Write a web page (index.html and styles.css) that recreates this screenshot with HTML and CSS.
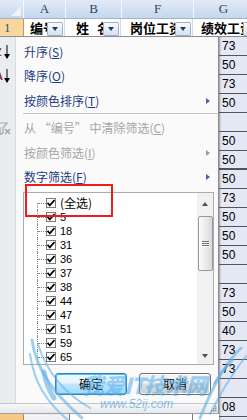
FILE: index.html
```html
<!DOCTYPE html>
<html lang="zh-CN">
<head>
<meta charset="utf-8">
<title>筛选</title>
<link rel="stylesheet" href="styles.css">
</head>
<body>
<div class="page">
  <div class="colhead">
    <div class="corner"><svg width="10" height="10" viewBox="0 0 10 10"><polygon points="10,0 10,10 0,10" fill="#eef3f9"/></svg></div>
    <div class="ch ch-a">A</div>
    <div class="ch ch-b">B</div>
    <div class="ch ch-f">F</div>
    <div class="ch ch-g">G</div>
  </div>
  <div class="row1">
    <div class="rh">1</div>
    <div class="hc hc-a"><span class="ht">编号</span><span class="dd"></span></div>
    <div class="hc hc-b"><span class="ht">姓<span class="gap">名</span></span><span class="dd"></span></div>
    <div class="hc hc-f"><span class="ht">岗位工资</span><span class="dd"></span></div>
    <div class="hc hc-g"><span class="ht">绩效工资</span><span class="dd"></span></div>
  </div>
  <div class="main">
    <div class="left">
      <div class="menu">
        <div class="mi h24">
          <span class="ico"><span class="ltr">Z</span><svg class="darr" width="6" height="14" viewBox="0 0 6 14"><path d="M3 0V10" stroke="#000" stroke-width="1"/><path d="M0 9H6L3 14Z" fill="#000"/></svg></span>
          <span class="lbl">升序(<u>S</u>)</span>
        </div>
        <div class="mi h24">
          <span class="ico"><span class="ltr ltr2">A</span><svg class="darr" width="6" height="14" viewBox="0 0 6 14"><path d="M3 0V10" stroke="#000" stroke-width="1"/><path d="M0 9H6L3 14Z" fill="#000"/></svg></span>
          <span class="lbl">降序(<u>O</u>)</span>
        </div>
        <div class="mi h25">
          <span class="ico"></span>
          <span class="lbl">按颜色排序(<u>T</u>)</span>
          <span class="arr"></span>
        </div>
        <div class="sep"></div>
        <div class="mi h24 dis">
          <span class="ico"><svg width="11" height="13" viewBox="0 0 11 13"><path d="M-3 1H7L3 6V11L0 12.5V6Z" fill="none" stroke="#9aa4ae" stroke-width="1.2"/><path d="M5 7L10 12M10 7L5 12" stroke="#9aa4ae" stroke-width="1.4"/></svg></span>
          <span class="lbl">从 “编号” 中清除筛选(<u>C</u>)</span>
        </div>
        <div class="mi h25 dis">
          <span class="ico"></span>
          <span class="lbl">按颜色筛选(<u>I</u>)</span>
          <span class="arr"></span>
        </div>
        <div class="mi h24">
          <span class="ico"></span>
          <span class="lbl">数字筛选(<u>F</u>)</span>
          <span class="arr"></span>
        </div>
        <div class="lb">
          <div class="tree">
            <div class="ti"><span class="conn first"></span><span class="cb"><svg width="8" height="8" viewBox="0 0 8 8"><path d="M0.5 3.8L2.8 6.3L7.5 1" fill="none" stroke="#000" stroke-width="1.8"/></svg></span><span class="tt cjk">(全选)</span></div>
            <div class="ti"><span class="conn"></span><span class="cb"><svg width="8" height="8" viewBox="0 0 8 8"><path d="M0.5 3.8L2.8 6.3L7.5 1" fill="none" stroke="#000" stroke-width="1.8"/></svg></span><span class="tt">5</span></div>
            <div class="ti"><span class="conn"></span><span class="cb"><svg width="8" height="8" viewBox="0 0 8 8"><path d="M0.5 3.8L2.8 6.3L7.5 1" fill="none" stroke="#000" stroke-width="1.8"/></svg></span><span class="tt">18</span></div>
            <div class="ti"><span class="conn"></span><span class="cb"><svg width="8" height="8" viewBox="0 0 8 8"><path d="M0.5 3.8L2.8 6.3L7.5 1" fill="none" stroke="#000" stroke-width="1.8"/></svg></span><span class="tt">31</span></div>
            <div class="ti"><span class="conn"></span><span class="cb"><svg width="8" height="8" viewBox="0 0 8 8"><path d="M0.5 3.8L2.8 6.3L7.5 1" fill="none" stroke="#000" stroke-width="1.8"/></svg></span><span class="tt">36</span></div>
            <div class="ti"><span class="conn"></span><span class="cb"><svg width="8" height="8" viewBox="0 0 8 8"><path d="M0.5 3.8L2.8 6.3L7.5 1" fill="none" stroke="#000" stroke-width="1.8"/></svg></span><span class="tt">37</span></div>
            <div class="ti"><span class="conn"></span><span class="cb"><svg width="8" height="8" viewBox="0 0 8 8"><path d="M0.5 3.8L2.8 6.3L7.5 1" fill="none" stroke="#000" stroke-width="1.8"/></svg></span><span class="tt">38</span></div>
            <div class="ti"><span class="conn"></span><span class="cb"><svg width="8" height="8" viewBox="0 0 8 8"><path d="M0.5 3.8L2.8 6.3L7.5 1" fill="none" stroke="#000" stroke-width="1.8"/></svg></span><span class="tt">44</span></div>
            <div class="ti"><span class="conn"></span><span class="cb"><svg width="8" height="8" viewBox="0 0 8 8"><path d="M0.5 3.8L2.8 6.3L7.5 1" fill="none" stroke="#000" stroke-width="1.8"/></svg></span><span class="tt">47</span></div>
            <div class="ti"><span class="conn"></span><span class="cb"><svg width="8" height="8" viewBox="0 0 8 8"><path d="M0.5 3.8L2.8 6.3L7.5 1" fill="none" stroke="#000" stroke-width="1.8"/></svg></span><span class="tt">51</span></div>
            <div class="ti"><span class="conn"></span><span class="cb"><svg width="8" height="8" viewBox="0 0 8 8"><path d="M0.5 3.8L2.8 6.3L7.5 1" fill="none" stroke="#000" stroke-width="1.8"/></svg></span><span class="tt">59</span></div>
            <div class="ti"><span class="conn"></span><span class="cb"><svg width="8" height="8" viewBox="0 0 8 8"><path d="M0.5 3.8L2.8 6.3L7.5 1" fill="none" stroke="#000" stroke-width="1.8"/></svg></span><span class="tt">65</span></div>
          </div>
          <div class="sb">
            <div class="sbbtn up"><span class="tri-up"></span></div>
            <div class="thumb"><span class="grip-l"></span><span class="grip-l"></span><span class="grip-l"></span></div>
            <div class="track"></div>
            <div class="sbbtn down"><span class="tri-down"></span></div>
          </div>
        </div>
        <div class="btns">
          <div class="btn ok">确定</div>
          <div class="btn">取消</div>
        </div>
      </div>
      <div class="grip">
        <svg width="6" height="6" viewBox="0 0 6 6"><g fill="#8193a8"><rect x="4" y="0" width="1.5" height="1.5"/><rect x="2" y="2" width="1.5" height="1.5"/><rect x="4" y="2" width="1.5" height="1.5"/><rect x="0" y="4" width="1.5" height="1.5"/><rect x="2" y="4" width="1.5" height="1.5"/><rect x="4" y="4" width="1.5" height="1.5"/></g></svg>
      </div>
      <div class="brow">
        <div class="brh"></div>
        <div class="bc bc1"></div>
        <div class="bc bc2"></div>
        <div class="bc bc3"></div>
      </div>
    </div>
    <div class="gcol">
      <div class="gc">73</div>
      <div class="gc">50</div>
      <div class="gc">73</div>
      <div class="gc">50</div>
      <div class="gc"></div>
      <div class="gc">50</div>
      <div class="gc thick">50</div>
      <div class="gc">50</div>
      <div class="gc">73</div>
      <div class="gc">50</div>
      <div class="gc">50</div>
      <div class="gc">50</div>
      <div class="gc"></div>
      <div class="gc">73</div>
      <div class="gc">50</div>
      <div class="gc">40</div>
      <div class="gc">73</div>
      <div class="gc">73</div>
      <div class="gc"></div>
      <div class="gc">08</div>
    </div>
  </div>

  <div class="redbox"></div>

  <div class="wm">
    <svg class="wm-wings" width="247" height="420" viewBox="0 0 247 420">
      <g fill="none" stroke="rgba(95,175,235,0.6)" stroke-linecap="round">
        <path d="M32 340 C36 368 52 392 82 418" stroke-width="3"/>
        <path d="M38 344 C46 370 62 392 90 408" stroke-width="2"/>
        <path d="M30 354 C34 382 46 402 68 420" stroke-width="2"/>
        <path d="M44 372 C46 384 50 392 54 398" stroke-width="5"/>
        <path d="M241 348 C226 362 212 388 200 418" stroke-width="3"/>
        <path d="M246 356 C232 374 220 394 210 414" stroke-width="2"/>
        <path d="M233 360 C224 368 218 376 214 384" stroke-width="2"/>
      </g>
    </svg>
    <span class="wm-t1">我爱IT技术网</span>
    <span class="wm-t2">www.52ij.com</span>
  </div>
</div>
</body>
</html>
```

FILE: styles.css
```css
* { box-sizing: border-box; }
html, body { margin: 0; padding: 0; }
body {
  width: 247px;
  height: 420px;
  overflow: hidden;
  background: #fff;
  font-family: "Noto Sans CJK SC", sans-serif;
}
.page {
  position: relative;
  width: 247px;
  height: 420px;
  overflow: hidden;
}

/* column header */
.colhead {
  display: flex;
  height: 19px;
  background: linear-gradient(#e2eaf6, #c5d7ee);
  border-bottom: 1px solid #9db4cf;
}
.corner {
  width: 23px;
  flex: none;
  display: flex;
  align-items: flex-end;
  justify-content: flex-end;
  padding: 0 2px 2px 0;
}
.ch {
  flex: none;
  border-left: 1px solid #f4f8fc;
  text-align: center;
  font: 13px/18px "Liberation Serif", serif;
  color: #2a4566;
}
.ch-a { width: 42px; }
.ch-b { width: 56px; }
.ch-f { width: 72px; }
.ch-g { width: 60px; }

/* row 1 */
.row1 {
  display: flex;
  height: 18px;
  border-bottom: 1px solid #8d8d8d;
}
.rh {
  width: 24px;
  flex: none;
  background: #f9d69b;
  border-right: 1px solid #c89a4f;
  font: 13px/17px "Liberation Serif", serif;
  color: #2f5a70;
  padding-left: 4px;
}
.hc {
  flex: none;
  display: flex;
  border-right: 1px solid #d4dbe6;
  padding-right: 1px;
}
.hc-a { width: 41px; padding-left: 6px; }
.hc-b { width: 56px; padding-left: 11px; }
.hc-f { width: 72px; padding-left: 9px; }
.hc-g { width: 68px; padding-left: 8px; }
.ht {
  flex: 1;
  min-width: 0;
  overflow: hidden;
  white-space: nowrap;
  font-size: 13px;
  font-weight: bold;
  line-height: 18px;
  color: #000;
}
.gap { margin-left: 8px; }
.dd {
  flex: none;
  width: 16px;
  height: 14px;
  align-self: flex-end;
  border: 1px solid #9fb2c9;
  border-radius: 1px;
  background: linear-gradient(#fbfcfe, #d6e0ed);
  display: flex;
  align-items: center;
  justify-content: center;
}
.dd::after {
  content: "";
  border-top: 4px solid #1f3a6e;
  border-left: 3.5px solid transparent;
  border-right: 3.5px solid transparent;
}

/* main */
.main {
  display: flex;
  height: 383px;
}
.left {
  width: 219px;
  flex: none;
  display: flex;
  flex-direction: column;
}
.menu {
  height: 366px;
  flex: none;
  border-right: 1px solid #8a8a8a;
  background: linear-gradient(to right, #e9edf0 0 15px, #d8dcdf 15px 16px, #fafafa 16px);
  padding-top: 3px;
  display: flex;
  flex-direction: column;
}
.mi {
  display: flex;
  align-items: center;
  flex: none;
  font-size: 12px;
  color: #1c3a82;
}
.h24 { height: 24px; }
.h25 { height: 25px; }
.ico {
  width: 16px;
  flex: none;
  height: 100%;
  display: flex;
  align-items: center;
  overflow: hidden;
}
.ltr {
  margin-left: -5px;
  font: bold 11px/1 "Liberation Sans", sans-serif;
  color: #b23a2e;
  width: 8px;
  flex: none;
}
.ltr2 { color: #8c2a22; }
.darr { flex: none; margin-left: 1px; }
.lbl {
  margin-left: 8px;
  flex: 1;
  white-space: nowrap;
  line-height: 16px;
}
.lbl u { text-underline-offset: 1px; }
.arr {
  flex: none;
  margin-right: 8px;
  width: 0;
  height: 0;
  border-left: 4px solid #4d5ea8;
  border-top: 3.5px solid transparent;
  border-bottom: 3.5px solid transparent;
}
.mi.dis { color: #a6a6a6; }
.mi.dis .arr { border-left-color: #9c9c9c; }
.sep {
  height: 1px;
  flex: none;
  margin: 0 0 2px 23px;
  background: #c5c5c5;
}

/* list box */
.lb {
  margin: 3px 0 0 23px;
  width: 191px;
  height: 173px;
  flex: none;
  border: 1px solid #a9adb2;
  background: #fff;
  display: flex;
}
.tree {
  flex: 1;
  padding-top: 3px;
}
.ti {
  height: 14px;
  display: flex;
  align-items: center;
}
.conn {
  flex: none;
  width: 9px;
  height: 14px;
  margin-left: 13px;
  border-left: 1px dotted #8c8c8c;
  display: flex;
  align-items: center;
}
.conn::after {
  content: "";
  width: 8px;
  border-top: 1px dotted #8c8c8c;
}
.conn.first {
  height: 7px;
  align-self: flex-end;
  align-items: flex-start;
}
.cb {
  flex: none;
  width: 10px;
  height: 10px;
  border: 1px solid #7c7c7c;
  background: #fff;
  display: flex;
  align-items: center;
  justify-content: center;
}
.tt {
  margin-left: 4px;
  font: 11px/14px "Liberation Sans", sans-serif;
  color: #000;
}
.tt.cjk {
  font: 12px/14px "Noto Sans CJK SC", sans-serif;
}

/* scrollbar */
.sb {
  width: 16px;
  flex: none;
  background: #f1f1f1;
  display: flex;
  flex-direction: column;
  align-items: center;
}
.sbbtn {
  flex: none;
  width: 16px;
  display: flex;
  align-items: center;
  justify-content: center;
}
.sbbtn.up { height: 22px; }
.sbbtn.down { height: 17px; }
.tri-up {
  border-bottom: 4px solid #4f4f4f;
  border-left: 3.5px solid transparent;
  border-right: 3.5px solid transparent;
}
.tri-down {
  border-top: 4px solid #4f4f4f;
  border-left: 3.5px solid transparent;
  border-right: 3.5px solid transparent;
}
.thumb {
  flex: none;
  margin-top: 1px;
  width: 15px;
  height: 55px;
  border: 1px solid #9a9a9a;
  border-radius: 2px;
  background: linear-gradient(to right, #fbfbfb, #ececec 50%, #d9d9d9);
  display: flex;
  flex-direction: column;
  align-items: center;
  justify-content: center;
  gap: 1px;
}
.grip-l {
  width: 7px;
  height: 1px;
  background: #6d6d6d;
  box-shadow: 0 1px 0 #ffffff;
}
.track { flex: 1; }

/* buttons */
.btns {
  display: flex;
  gap: 12px;
  margin: 8px 0 0 55px;
  height: 22px;
  flex: none;
}
.btn {
  width: 72px;
  height: 22px;
  border: 1px solid #707070;
  border-radius: 3px;
  background: linear-gradient(#f3f3f3 0 45%, #dddddd 50%, #cfcfcf);
  box-shadow: inset 0 0 0 1px #fcfcfc;
  font-size: 12px;
  line-height: 20px;
  text-align: center;
  color: #000;
}
.btn.ok {
  border-color: #3c7fb1;
  background: linear-gradient(#eaf6fd 0 45%, #bee6fd 50%, #a7d9f5);
  box-shadow: inset 0 0 0 1px #48c2f5;
}

/* grip strip */
.grip {
  height: 10px;
  flex: none;
  border-top: 1px solid #c6c6c6;
  border-right: 1px solid #8a8a8a;
  background: linear-gradient(#f8f8f8, #e5e8eb);
  display: flex;
  justify-content: flex-end;
  align-items: flex-end;
  padding: 0 1px 1px 0;
}

/* bottom row */
.brow {
  flex: 1;
  display: flex;
  border-top: 1px solid #9aa3ad;
}
.brh {
  width: 24px;
  flex: none;
  background: #f5c884;
  border-right: 1px solid #b5894a;
}
.bc {
  flex: none;
  background: #fff;
  border-right: 1px solid #7a7a7a;
}
.bc1 { width: 46px; background: #f1f1f3; }
.bc2 { width: 123px; }
.bc3 { width: 26px; border-right: none; }

/* G column */
.gcol {
  flex: 1;
  background: #e4e7f4;
  box-shadow: inset 2px 0 2px -1px rgba(0, 0, 0, 0.35);
}
.gc {
  height: 19px;
  border-bottom: 1px solid #555;
  padding-left: 3px;
  font: 12px/18px "Liberation Sans", sans-serif;
  color: #000;
}
.gc.thick { border-bottom-width: 2px; }

/* annotation */
.redbox {
  position: absolute;
  left: 25px;
  top: 184px;
  width: 88px;
  height: 33px;
  border: 2px solid #ee1c1c;
}

/* watermark */
.wm {
  position: absolute;
  left: 0;
  top: 0;
  width: 247px;
  height: 420px;
  pointer-events: none;
}
.wm-wings { position: absolute; left: 0; top: 0; }
.wm-t1 {
  position: absolute;
  left: 82px;
  top: 372px;
  font: italic 900 22px/24px "Noto Sans CJK SC", sans-serif;
  color: rgba(80, 170, 235, 0.55);
  white-space: nowrap;
  letter-spacing: -1px;
}
.wm-t2 {
  position: absolute;
  left: 100px;
  top: 398px;
  font: italic 12px/13px "Liberation Sans", sans-serif;
  color: rgba(60, 150, 225, 0.6);
  white-space: nowrap;
}
```
